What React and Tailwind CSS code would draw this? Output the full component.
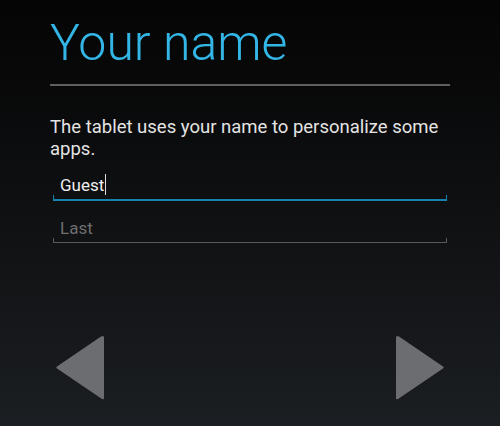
export default function App() {
  return (
    <div
      className="flex h-[426px] w-[500px] flex-col bg-gradient-to-b from-[#050505] to-[#1b1e22] px-[50px] text-[#e6e6e6]"
      style={{ fontFamily: "Roboto, 'Liberation Sans', sans-serif" }}
    >
      <h1 className="mt-[13px] h-[60px] text-[50px] font-light leading-[60px] text-[#33b5e5]">
        Your name
      </h1>
      <div className="mt-[11px] h-[2px] w-[400px] bg-[#5f5f5f]" />

      <p className="mt-[30px] text-[18.5px] leading-[22px] text-[#e4e4e4]">
        The tablet uses your name to personalize some apps.
      </p>

      <div className="ml-[3px] mt-[13px] w-[394px]">
        <div className="relative flex h-[28px] items-end border-b-2 border-[#1783ad] pb-[4px] pl-[7px]">
          <span className="text-[17px] leading-[20px] text-[#f0f0f0]">Guest</span>
          <span className="ml-px h-[21px] w-px self-end bg-[#e0e0e0]" />
          <span className="absolute bottom-0 left-0 h-[4px] w-px bg-[#1783ad]" />
          <span className="absolute bottom-0 right-0 h-[4px] w-px bg-[#1783ad]" />
        </div>
        <div className="relative mt-[14px] flex h-[28px] items-end border-b border-[#5a5a5a] pb-[4px] pl-[7px]">
          <span className="text-[17px] leading-[20px] text-[#6e6e6e]">Last</span>
          <span className="absolute bottom-0 left-0 h-[4px] w-px bg-[#5a5a5a]" />
          <span className="absolute bottom-0 right-0 h-[4px] w-px bg-[#5a5a5a]" />
        </div>
      </div>

      <div className="mt-auto mb-[25px] flex items-center justify-between px-[5px]">
        <svg width="50" height="66" viewBox="0 0 50 66">
          <path
            d="M48 1 Q49 1 49 3 L49 63 Q49 65 47 64 L2 33.5 Q0.5 32.5 2 31.5 L46 1.5 Z"
            fill="#6b6d70"
          />
        </svg>
        <svg width="50" height="66" viewBox="0 0 50 66">
          <path
            d="M2 1 Q1 1 1 3 L1 63 Q1 65 3 64 L48 33.5 Q49.5 32.5 48 31.5 L4 1.5 Z"
            fill="#6b6d70"
          />
        </svg>
      </div>
    </div>
  );
}
